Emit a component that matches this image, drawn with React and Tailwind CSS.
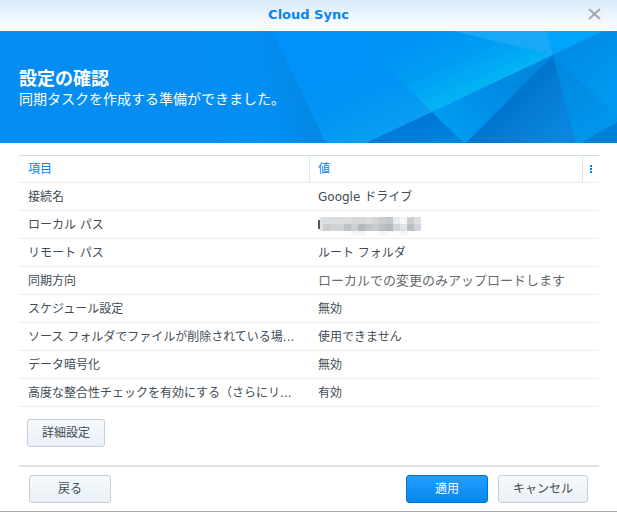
import React from 'react';

const rows = [
  { name: '接続名', value: 'Google ドライブ' },
  { name: 'ローカル パス', masked: true },
  { name: 'リモート パス', value: 'ルート フォルダ' },
  { name: '同期方向', value: 'ローカルでの変更のみアップロードします', large: true },
  { name: 'スケジュール設定', value: '無効' },
  { name: 'ソース フォルダでファイルが削除されている場...', value: '使用できません' },
  { name: 'データ暗号化', value: '無効' },
  { name: '高度な整合性チェックを有効にする（さらにリ...', value: '有効' }
];

// colours of the 7px blocks that hide the local path
const mosaic = [
  ['#d9dde0', '#dbdddf', '#dcdddf', '#dcdcde', '#d6d8da', '#d5d7d9', '#dadcdd', '#d3d5d7', '#c9cbcd', '#c5c8ca', '#e8edef', '#f5f7f4', '#cccdcf', '#dddfe1'],
  ['#cbcdce', '#cfd1d2', '#d2d3d5', '#bfc3c9', '#cbced0', '#b7babc', '#c0c4c9', '#c8cacc', '#bcbfc1', '#b6b9bb', '#d0d5dd', '#dfe2e4', '#bcbec0', '#d1d6de'],
  ['#ffffff', '#ffffff', '#ffffff', '#ffffff', '#f3f5f7', '#f1f3f5', '#ffffff', '#ffffff', '#f2f4f6', '#fafbfc', '#fafbfc', '#f2f4f7', '#ffffff', '#ffffff']
];

const MaskedPath = () => (
  <svg width="103" height="18" viewBox="0 0 103 18" className="block mt-0.5" shapeRendering="crispEdges" aria-hidden="true">
    <rect x="0" y="3" width="2" height="9" fill="#5a5350" />
    <rect x="2" y="0" width="3" height="14" fill="#dfe2e4" />
    {mosaic.map((line, y) =>
      line.map((color, x) => (
        <rect key={`${x}-${y}`} x={5 + x * 7} y={y * 7} width="7" height={y === 2 ? 4 : 7} fill={color} />
      ))
    )}
  </svg>
);

const BannerArt = () => (
  <svg
    className="absolute inset-0 w-full h-full"
    viewBox="0 0 617 112"
    preserveAspectRatio="xMaxYMid slice"
    aria-hidden="true"
  >
    <defs>
      <linearGradient id="left" gradientUnits="userSpaceOnUse" x1="205" y1="76" x2="299" y2="56">
        <stop offset="0" stopColor="#058df1" />
        <stop offset="0.4" stopColor="#038ff5" />
        <stop offset="0.75" stopColor="#038df0" />
        <stop offset="1" stopColor="#0488e6" />
      </linearGradient>
      <linearGradient id="middle" gradientUnits="userSpaceOnUse" x1="320" y1="0" x2="370" y2="112">
        <stop offset="0" stopColor="#0091fb" />
        <stop offset="0.55" stopColor="#0092f4" />
        <stop offset="1" stopColor="#0c9ef2" />
      </linearGradient>
      <linearGradient id="glow" gradientUnits="userSpaceOnUse" x1="430" y1="0" x2="460" y2="68">
        <stop offset="0" stopColor="#0092f4" />
        <stop offset="0.5" stopColor="#009df3" />
        <stop offset="1" stopColor="#03b5f5" />
      </linearGradient>
      <linearGradient id="fold" gradientUnits="userSpaceOnUse" x1="540" y1="30" x2="450" y2="105">
        <stop offset="0" stopColor="#0083db" />
        <stop offset="0.6" stopColor="#0090e8" />
        <stop offset="1" stopColor="#009cf3" />
      </linearGradient>
      <linearGradient id="shade" gradientUnits="userSpaceOnUse" x1="505" y1="65" x2="550" y2="112">
        <stop offset="0" stopColor="#0073cc" />
        <stop offset="1" stopColor="#0a86df" />
      </linearGradient>
      <linearGradient id="corner" gradientUnits="userSpaceOnUse" x1="425" y1="84" x2="430" y2="112">
        <stop offset="0" stopColor="#0074d4" />
        <stop offset="1" stopColor="#0082df" />
      </linearGradient>
      <linearGradient id="right" gradientUnits="userSpaceOnUse" x1="575" y1="10" x2="617" y2="60">
        <stop offset="0" stopColor="#008ce5" />
        <stop offset="1" stopColor="#0099f2" />
      </linearGradient>
      <linearGradient id="lower" gradientUnits="userSpaceOnUse" x1="560" y1="40" x2="600" y2="100">
        <stop offset="0" stopColor="#0089df" />
        <stop offset="1" stopColor="#0096ec" />
      </linearGradient>
    </defs>
    <rect width="617" height="112" fill="#058df1" />
    <path d="M180 0H272L326 112H180Z" fill="url(#left)" />
    <path d="M272 0H353L432 81L366 112H326Z" fill="url(#middle)" />
    <path d="M353 0H453L553 24L432 81Z" fill="url(#glow)" />
    <path d="M453 0H547L553 24Z" fill="#17a9f5" />
    <path d="M547 0H603L553 24Z" fill="#00a5fb" />
    <path d="M603 0H617V85L553 24Z" fill="url(#right)" />
    <path d="M366 112L432 81L464 112Z" fill="url(#corner)" />
    <path d="M432 81L553 24L466 112H464Z" fill="url(#fold)" />
    <path d="M553 24L576 112H466Z" fill="url(#shade)" />
    <path d="M553 24L617 85V91L581 112H576Z" fill="url(#lower)" />
    <path d="M581 112L617 91V112Z" fill="#007fd8" />
  </svg>
);

const Button = ({ className, primary, children }) => (
  <button
    type="button"
    className={`h-7 rounded-[3px] border text-xs leading-4 ${
      primary
        ? 'border-[#0073d0] bg-linear-to-b from-[#239eff] to-[#0088ee] text-white'
        : 'border-[#c3ced9] bg-linear-to-b from-[#f6fafd] to-[#eaf0f5] text-[#414b55]'
    } ${className}`}
  >
    {children}
  </button>
);

const App = () => {
  return (
    <div className="min-h-screen flex flex-col bg-white border-b border-[#a8a8a8] text-xs text-[#414b55] font-['DejaVu_Sans','Noto_Sans_CJK_JP',sans-serif]">
      <header className="relative h-[31px] flex items-center justify-center bg-linear-to-b from-[#d8ebfa] to-white">
        <h1 className="text-[13px] leading-4 font-bold text-[#0a84ea] pb-0.5">Cloud Sync</h1>
        <button type="button" aria-label="閉じる" className="absolute right-4 top-2">
          <svg width="13" height="12" viewBox="0 0 13 12" fill="none" stroke="#a5a8a8" strokeWidth="2">
            <path d="M1 1L12 11M12 1L1 11" />
          </svg>
        </button>
      </header>

      <section className="relative h-28 overflow-hidden text-white">
        <BannerArt />
        <div className="relative pl-[19px] pt-9">
          <h2 className="text-lg leading-6 font-bold">設定の確認</h2>
          <p className="text-sm leading-4">同期タスクを作成する準備ができました。</p>
        </div>
      </section>

      <main className="flex-1 pr-[18px] pt-3 pl-[19px]">
        <table className="w-full table-fixed border-separate border-spacing-0 leading-4">
          <thead>
            <tr className="text-left text-[#0086ec]">
              <th className="w-1/2 h-7 px-[9px] font-normal border-y border-t-[#cfdfec] border-b-[#e8eef3]">
                項目
              </th>
              <th className="px-2 font-normal border-y border-l border-t-[#cfdfec] border-l-[#dbe7f2] border-b-[#e8eef3]">
                値
              </th>
              <th className="w-[17px] border-y border-l border-t-[#cfdfec] border-l-[#dbe7f2] border-b-[#e8eef3]">
                <button type="button" aria-label="列" className="flex flex-col gap-px mx-auto">
                  <span className="size-[2px] bg-[#0086ec]"></span>
                  <span className="size-[2px] bg-[#0086ec]"></span>
                  <span className="size-[2px] bg-[#0086ec]"></span>
                </button>
              </th>
            </tr>
          </thead>
          <tbody>
            {rows.map(row => (
              <tr key={row.name}>
                <td className="h-7 px-[9px] whitespace-nowrap border-b border-[#e8eef3]">{row.name}</td>
                <td colSpan={2} className="px-[9px] whitespace-nowrap border-b border-[#e8eef3]">
                  {row.masked && <MaskedPath />}
                  {row.large && <span className="text-[13px] text-[#666a6e]">{row.value}</span>}
                  {!row.masked && !row.large && row.value}
                </td>
              </tr>
            ))}
          </tbody>
        </table>
        <Button className="mt-3 ml-2 w-[78px]">詳細設定</Button>
      </main>

      <footer className="ml-[19px] mr-[18px] border-t-2 border-[#e0e2e4] pt-2 pb-2 pl-[10px] pr-[11px] flex items-center gap-[10px]">
        <Button className="w-[82px] mr-auto">戻る</Button>
        <Button primary className="w-[82px]">適用</Button>
        <Button className="w-[90px]">キャンセル</Button>
      </footer>
    </div>
  );
};

export default App;
